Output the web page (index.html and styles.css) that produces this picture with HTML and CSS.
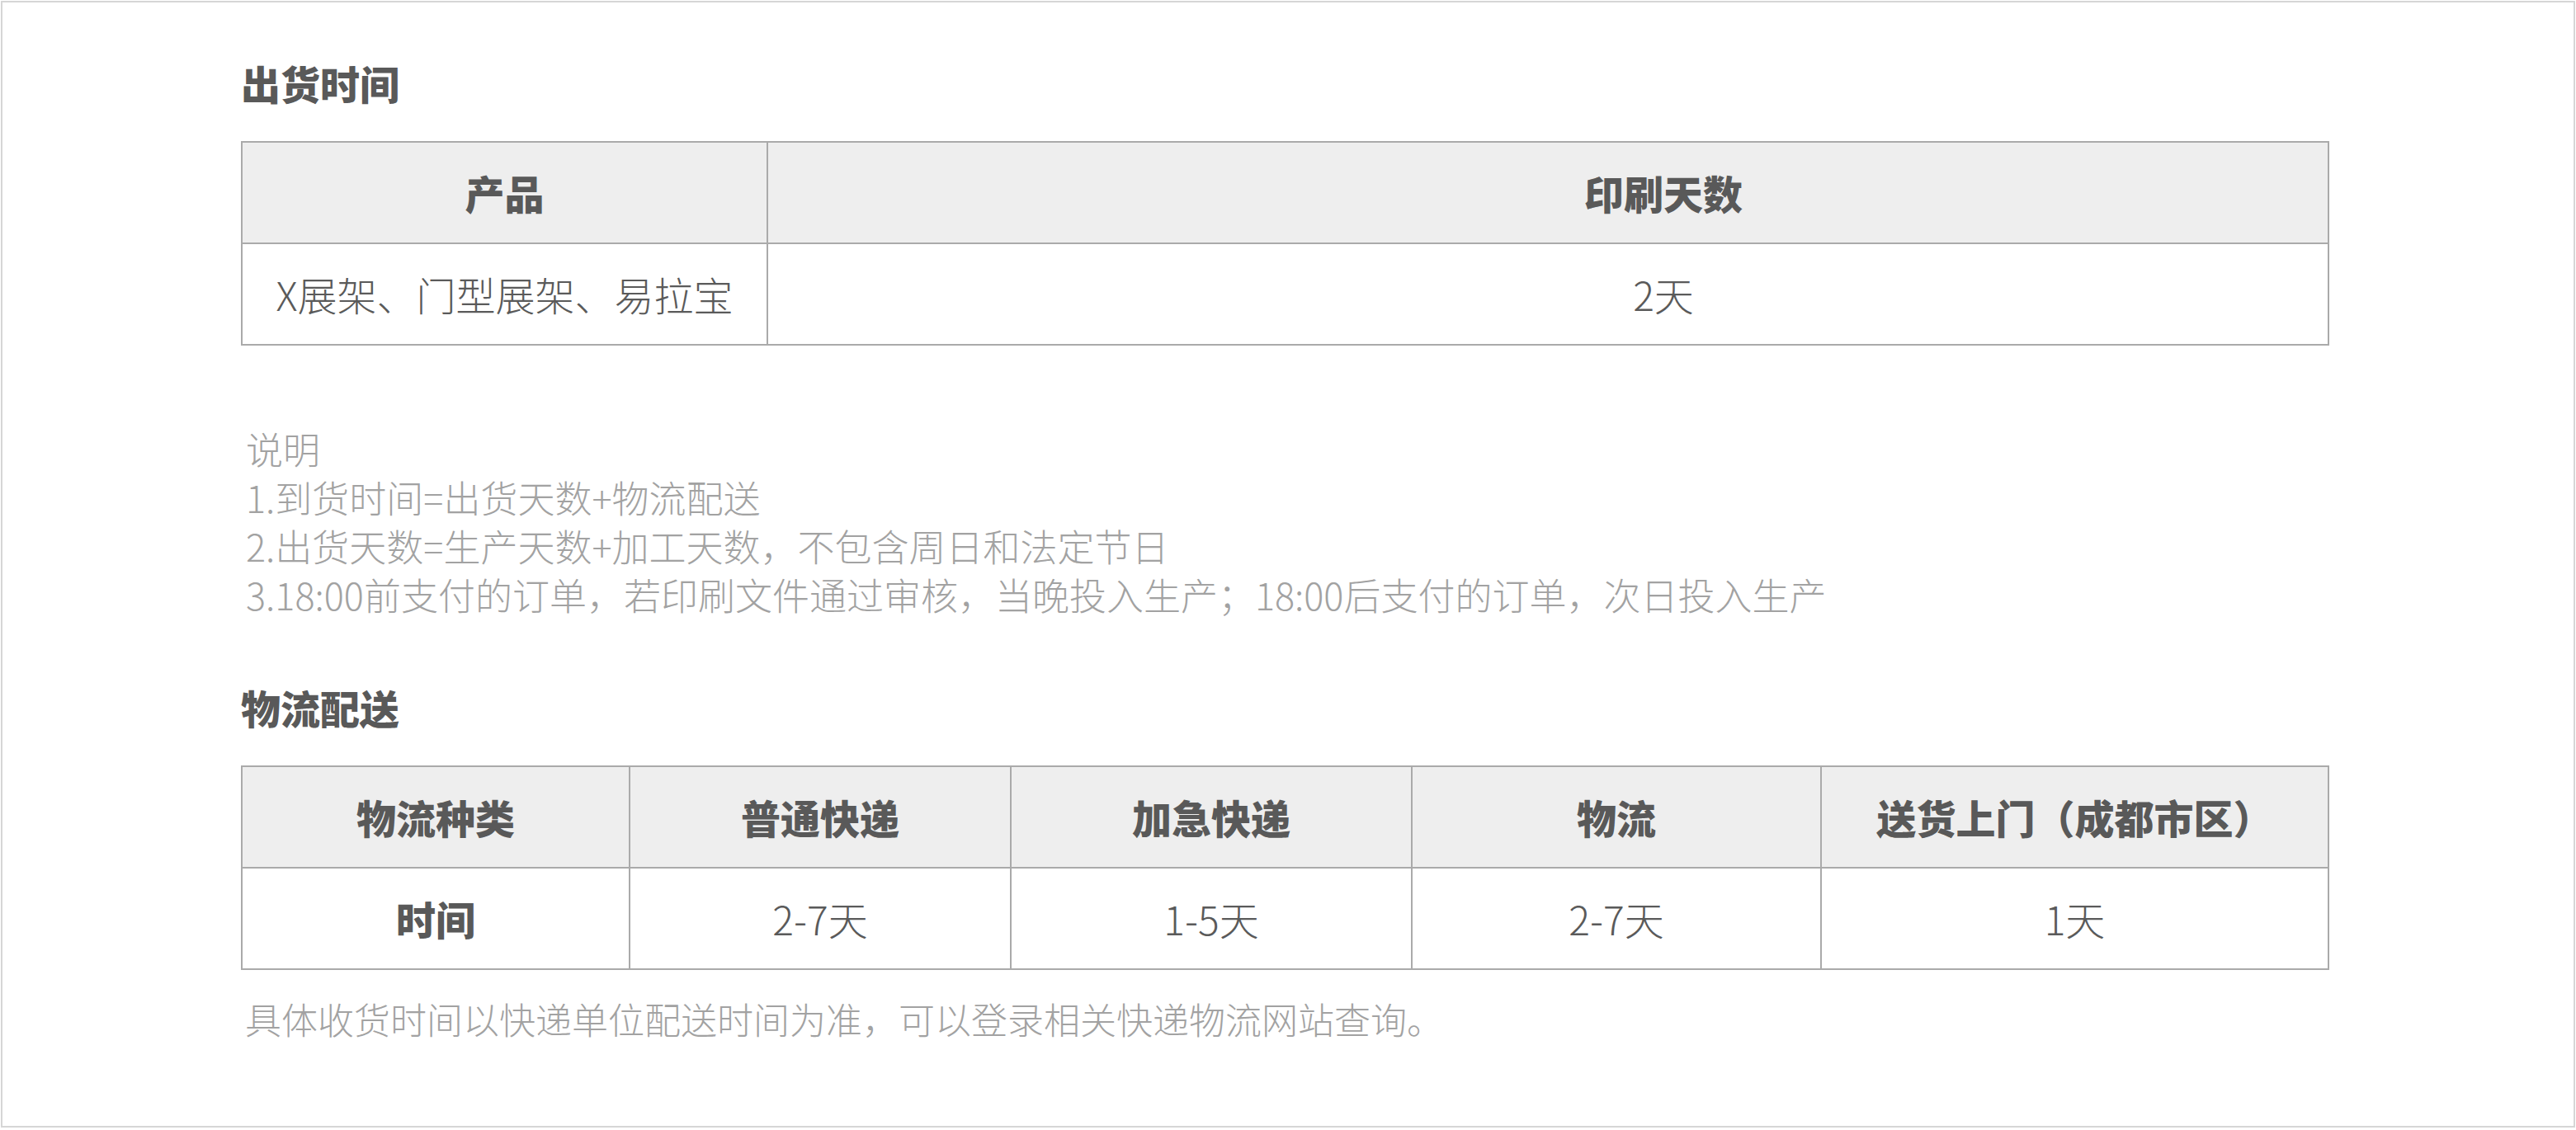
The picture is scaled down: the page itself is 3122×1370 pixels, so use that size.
FILE: index.html
```html
<!DOCTYPE html>
<html lang="zh-CN">
<head>
    <meta charset="UTF-8">
    <meta name="viewport" content="width=device-width, initial-scale=1.0">
    <title>出货时间 - 物流配送</title>
    <link rel="stylesheet" href="styles.css">
</head>
<body>

<div class="page">
    <section class="block">
        <h2 class="block-title">出货时间</h2>
        <table class="info-table ship-table">
            <colgroup>
                <col class="col-product">
                <col>
            </colgroup>
            <tr>
                <th>产品</th>
                <th class="days">印刷天数</th>
            </tr>
            <tr>
                <td>X展架、门型展架、易拉宝</td>
                <td class="days">2天</td>
            </tr>
        </table>

        <div class="notes">
            <p>说明</p>
            <p>1.到货时间=出货天数+物流配送</p>
            <p>2.出货天数=生产天数+加工天数，不包含周日和法定节日</p>
            <p>3.18:00前支付的订单，若印刷文件通过审核，当晚投入生产；18:00后支付的订单，次日投入生产</p>
        </div>
    </section>

    <section class="block">
        <h2 class="block-title title-second">物流配送</h2>
        <table class="info-table delivery-table">
            <colgroup>
                <col class="col-a">
                <col class="col-b">
                <col class="col-c">
                <col class="col-d">
                <col>
            </colgroup>
            <tr>
                <th>物流种类</th>
                <th>普通快递</th>
                <th>加急快递</th>
                <th>物流</th>
                <th>送货上门（成都市区）</th>
            </tr>
            <tr>
                <th class="row-label">时间</th>
                <td>2-7天</td>
                <td>1-5天</td>
                <td>2-7天</td>
                <td>1天</td>
            </tr>
        </table>

        <p class="tip">具体收货时间以快递单位配送时间为准，可以登录相关快递物流网站查询。</p>
    </section>
</div>

</body>
</html>
```

FILE: styles.css
```css
body {
    margin: 0;
    padding: 0;
    background: #fff;
    font-family: "Noto Sans CJK SC", "Liberation Sans", sans-serif;
    color: #5b5b5b;
}

.page {
    margin: 1px;
    height: 1366px;
    box-sizing: border-box;
    border: 2px solid #d6d6d6;
    padding: 73px 0 0 289px;
}

.block-title {
    margin: 0;
    font-size: 48px;
    line-height: 48px;
    font-weight: 900;
    color: #595959;
}

.title-second {
    margin-top: 83px;
}

.info-table {
    width: 2531px;
    table-layout: fixed;
    border-collapse: collapse;
    margin-top: 47px;
    font-size: 48px;
}

.info-table th,
.info-table td {
    border: 2px solid #aaaaaa;
    padding: 0;
    line-height: 121px;
    text-align: center;
    white-space: nowrap;
}

.info-table th {
    background: #eeeeee;
    font-weight: 900;
    color: #595959;
}

.info-table td {
    font-weight: 300;
    color: #5a5a5a;
}

.info-table th.row-label {
    background: #fff;
}

.info-table .days {
    padding-left: 280px;
}

.col-product { width: 637px; }

.col-a { width: 470px; }
.col-b { width: 462px; }
.col-c { width: 486px; }
.col-d { width: 496px; }

.notes {
    margin-top: 95px;
    padding-left: 6px;
    font-size: 45px;
    line-height: 59px;
    font-weight: 300;
    color: #a2a2a2;
}

.notes p {
    margin: 0;
}

.tip {
    margin: 30px 0 0;
    padding-left: 5px;
    font-size: 44px;
    line-height: 59px;
    font-weight: 300;
    color: #a2a2a2;
}
```
